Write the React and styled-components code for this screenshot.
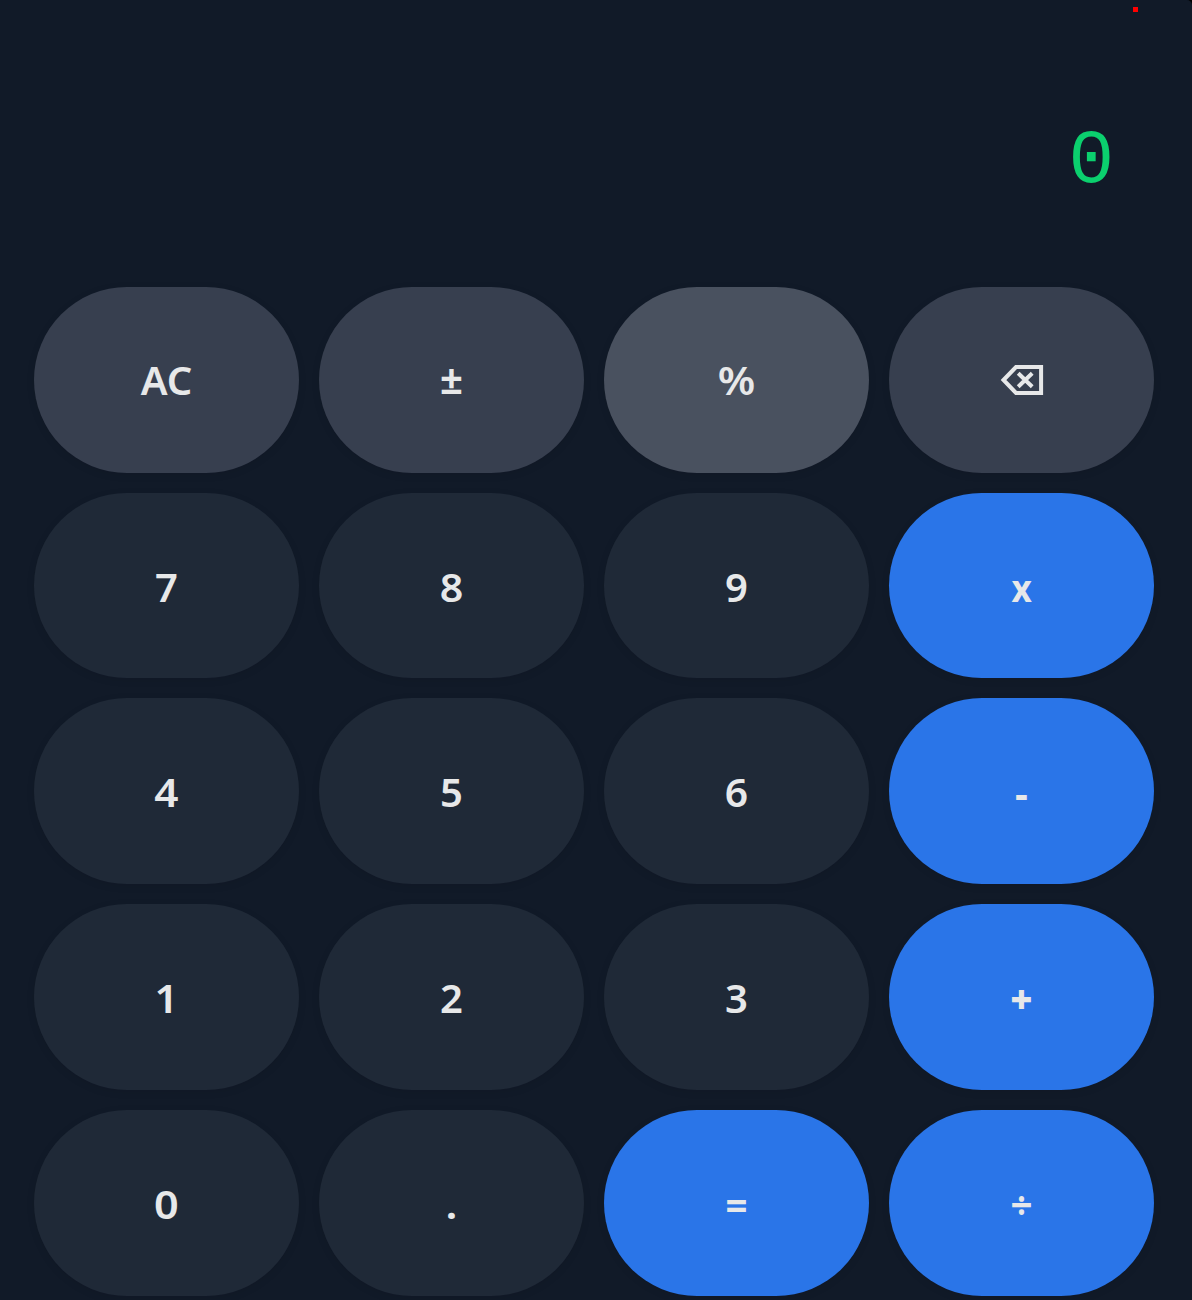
import React from "react";
import styled, { createGlobalStyle } from "styled-components";

const GlobalStyle = createGlobalStyle`
  *, *::before, *::after { box-sizing: border-box; }
  body { margin: 0; background: #000; }
`;

const Calculator = styled.main`
  position: relative;
  display: flex;
  flex-direction: column;
  width: 1192px;
  height: 1300px;
  padding: 0 38px 4px 34px;
  overflow: hidden;
  background: #111a28;
  border-top-right-radius: 5px;
  font-family: "Noto Sans", "Open Sans", sans-serif;
`;

const Display = styled.output`
  display: flex;
  align-items: center;
  justify-content: flex-end;
  flex: 0 0 286.8px;
  padding: 38px 40px 0 0;
  color: #0bd06e;
  font: 400 76px/1 "Liberation Mono", monospace;
`;

const Indicator = styled.span`
  position: absolute;
  top: 7px;
  right: 54px;
  width: 5px;
  height: 5px;
  background: #ff0000;
`;

const Keypad = styled.section`
  display: grid;
  flex: 1;
  grid-template-columns: repeat(4, 1fr);
  grid-template-rows: repeat(5, 1fr);
  gap: 20px;
`;

const tones = {
  digit: "#1f2937",
  utility: "#373f4f",
  active: "#49515f",
  operator: "#2a75e8",
};

const Key = styled.button`
  display: flex;
  align-items: center;
  justify-content: center;
  min-width: 0;
  min-height: 0;
  padding: 0;
  border: 0;
  border-radius: 999px;
  background: ${({ $tone }) => tones[$tone]};
  box-shadow: 0 2px 8px rgba(0, 0, 0, 0.08);
  color: #e7e8e9;
  font: 600 40px/1.4 "Noto Sans", "Open Sans", sans-serif;
  cursor: pointer;
`;

const Label = styled.span`
  display: block;
  font-size: ${({ $size = 40 }) => $size}px;
  font-weight: ${({ $weight = 600 }) => $weight};
  transform: translateY(${({ $shift = 0 }) => $shift}px) scaleX(${({ $stretch = 1 }) => $stretch});
`;

const EraseIcon = styled.svg`
  display: block;
  width: 44px;
  height: 30px;
`;

const Backspace = () => (
  <EraseIcon viewBox="0 0 44 30" fill="none" stroke="currentColor" aria-hidden="true">
    <path d="M3.5 15 16 2.1h25.1v25.8H16L3.5 15Z" strokeWidth="4" />
    <path d="m18.2 8.2 14 13.6m0-13.6-14 13.6" strokeWidth="4" />
  </EraseIcon>
);

const keys = [
  { label: "AC", tone: "utility" },
  { label: "±", tone: "utility", weight: 700, shift: -1 },
  { label: "%", tone: "active", weight: 650, stretch: 1.07 },
  { label: "erase", tone: "utility" },
  { label: "7", tone: "digit", shift: 1 },
  { label: "8", tone: "digit", stretch: 1.03, shift: 1 },
  { label: "9", tone: "digit", shift: 1 },
  { label: "x", tone: "operator", size: 37, weight: 700, stretch: 0.95, shift: 1.5 },
  { label: "4", tone: "digit", stretch: 1.06, shift: 1 },
  { label: "5", tone: "digit", shift: 1 },
  { label: "6", tone: "digit", stretch: 1.02, shift: 1 },
  { label: "-", tone: "operator", weight: 700, shift: 2 },
  { label: "1", tone: "digit", stretch: 1.04, shift: 1 },
  { label: "2", tone: "digit", shift: 1 },
  { label: "3", tone: "digit", shift: 1 },
  { label: "+", tone: "operator", size: 38, weight: 900, shift: 1 },
  { label: "0", tone: "digit", stretch: 1.08, shift: 1 },
  { label: ".", tone: "digit", stretch: 1.08, shift: 1 },
  { label: "=", tone: "operator", weight: 700, stretch: 0.96, shift: 2 },
  { label: "÷", tone: "operator", weight: 700, stretch: 0.96, shift: 1 },
];

export default function App() {
  return (
    <>
      <GlobalStyle />
      <Calculator>
        <Indicator />
        <Display>0</Display>
        <Keypad>
          {keys.map(({ label, tone, size, weight, shift, stretch }) => (
            <Key key={label} type="button" $tone={tone}>
              {label === "erase" ? (
                <Backspace />
              ) : (
                <Label $size={size} $weight={weight} $shift={shift} $stretch={stretch}>
                  {label}
                </Label>
              )}
            </Key>
          ))}
        </Keypad>
      </Calculator>
    </>
  );
}
